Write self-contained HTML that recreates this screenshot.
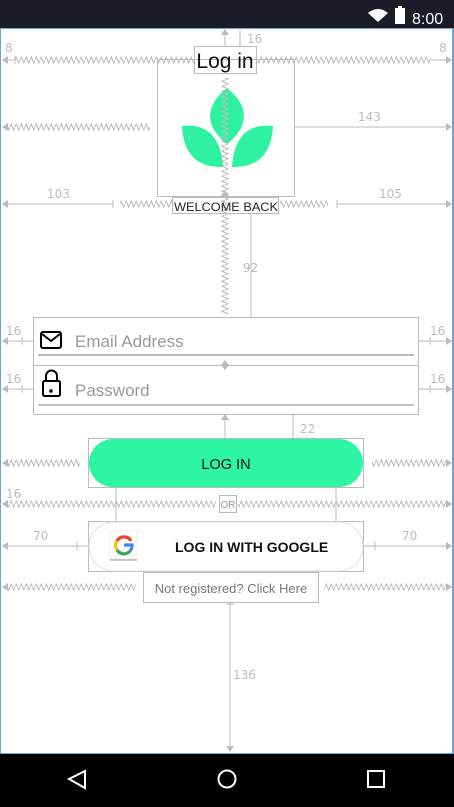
<!DOCTYPE html>
<html><head><meta charset="utf-8"><style>
html,body{margin:0;padding:0;width:454px;height:807px;overflow:hidden;background:#fff;font-family:"Liberation Sans",sans-serif}
.a{position:absolute}
</style></head><body>
<div class="a" style="left:0;top:0;width:454px;height:28px;background:#1a1d27"></div>
<div class="a" style="left:0;top:28px;width:454px;height:726px;box-sizing:border-box;border-left:1px solid #6fa3dc;border-right:2px solid #6fa3dc;border-top:1px solid #6fa3dc;border-bottom:1px solid #6fa3dc"></div>
<div class="a" style="left:0;top:754px;width:454px;height:53px;background:#000"></div>
<svg class="a" style="left:0;top:0" width="454" height="807" viewBox="0 0 454 807">
<defs>
<pattern id="zh" width="5" height="8" patternUnits="userSpaceOnUse"><path d="M0 4 L1.25 1 L3.75 7 L5 4" stroke="#bbb" fill="none" stroke-width="1"/></pattern>
<pattern id="zv" width="8" height="5" patternUnits="userSpaceOnUse"><path d="M4 0 L1 1.25 L7 3.75 L4 5" stroke="#bbb" fill="none" stroke-width="1"/></pattern>
</defs>
<path d="M368 13 L378 22 L388 13 Q378 5 368 13Z" fill="#fff"/>
<rect x="395" y="8" width="10" height="16" fill="#fff"/><rect x="398" y="6" width="4" height="3" fill="#fff"/>
<text x="412" y="24" fill="#fff" font-size="16">8:00</text>
<g stroke="#bbb" fill="none" stroke-width="1">
<line x1="2" y1="60" x2="15" y2="60"/><line x1="15" y1="56" x2="15" y2="64"/>
<line x1="431" y1="60" x2="451" y2="60"/>
<line x1="294" y1="127" x2="451" y2="127"/>
<line x1="2" y1="204" x2="113" y2="204"/><line x1="113" y1="200" x2="113" y2="208"/>
<line x1="337" y1="204" x2="451" y2="204"/><line x1="337" y1="200" x2="337" y2="208"/>
<line x1="225" y1="30" x2="225" y2="46"/><line x1="240" y1="28" x2="240" y2="46"/>
<line x1="251" y1="213" x2="251" y2="317"/>
<line x1="2" y1="341" x2="33" y2="341"/><line x1="22" y1="337" x2="22" y2="345"/>
<line x1="418" y1="341" x2="451" y2="341"/><line x1="430" y1="337" x2="430" y2="345"/>
<line x1="2" y1="389" x2="33" y2="389"/><line x1="22" y1="385" x2="22" y2="393"/>
<line x1="418" y1="389" x2="451" y2="389"/><line x1="430" y1="385" x2="430" y2="393"/>
<line x1="225" y1="414" x2="225" y2="438"/><line x1="293" y1="414" x2="293" y2="438"/>
<line x1="116" y1="487" x2="116" y2="521"/><line x1="336" y1="487" x2="336" y2="521"/>
<line x1="2" y1="546" x2="88" y2="546"/><line x1="77" y1="542" x2="77" y2="550"/>
<line x1="363" y1="546" x2="451" y2="546"/><line x1="375" y1="542" x2="375" y2="550"/>
<line x1="230" y1="603" x2="230" y2="750"/><line x1="226" y1="604" x2="234" y2="604"/>
<rect x="194.5" y="46.5" width="62" height="27"/>
<rect x="157.5" y="59.5" width="137" height="137"/>
<rect x="172.5" y="197.5" width="106" height="16"/>
<rect x="33.5" y="317.5" width="385" height="48"/>
<rect x="33.5" y="365.5" width="385" height="49"/>
<rect x="88.5" y="438.5" width="275" height="49"/>
<rect x="219.5" y="495.5" width="17" height="17"/>
<rect x="88.5" y="521.5" width="275" height="50"/>
<rect x="143.5" y="572.5" width="175" height="30"/>
</g>
<g fill="#bbb">
<path d="M2 60 L8 56 L8 64Z"/><path d="M452 60 L446 56 L446 64Z"/>
<path d="M2 127 L8 123 L8 131Z"/><path d="M452 127 L446 123 L446 131Z"/>
<path d="M2 204 L8 200 L8 208Z"/><path d="M452 204 L446 200 L446 208Z"/>
<path d="M225 29 L221 35 L229 35Z"/>
<path d="M2 341 L8 337 L8 345Z"/><path d="M452 341 L446 337 L446 345Z"/>
<path d="M2 389 L8 385 L8 393Z"/><path d="M452 389 L446 385 L446 393Z"/>
<path d="M225 414 L221 420 L229 420Z"/>
<path d="M2 463 L8 459 L8 467Z"/><path d="M452 463 L446 459 L446 467Z"/>
<path d="M2 504 L8 500 L8 508Z"/><path d="M452 504 L446 500 L446 508Z"/>
<path d="M2 546 L8 542 L8 550Z"/><path d="M452 546 L446 542 L446 550Z"/>
<path d="M2 587 L8 583 L8 591Z"/><path d="M452 587 L446 583 L446 591Z"/>
<path d="M230 752 L226 746 L234 746Z"/>
<path d="M225 190 L221 196 L229 196Z"/>
<path d="M221 365 L229 365 L225 360Z M221 365 L229 365 L225 370Z"/>
</g>
<g transform="translate(0,56)"><rect x="15" y="0" width="179" height="8" fill="url(#zh)"/><rect x="256" y="0" width="175" height="8" fill="url(#zh)"/></g>
<g transform="translate(0,123)"><rect x="6" y="0" width="144" height="8" fill="url(#zh)"/></g>
<g transform="translate(0,200)"><rect x="120" y="0" width="52" height="8" fill="url(#zh)"/><rect x="280" y="0" width="48" height="8" fill="url(#zh)"/></g>
<g transform="translate(0,459)"><rect x="6" y="0" width="74" height="8" fill="url(#zh)"/><rect x="372" y="0" width="74" height="8" fill="url(#zh)"/></g>
<g transform="translate(0,500)"><rect x="6" y="0" width="210" height="8" fill="url(#zh)"/><rect x="238" y="0" width="208" height="8" fill="url(#zh)"/></g>
<g transform="translate(0,583)"><rect x="6" y="0" width="130" height="8" fill="url(#zh)"/><rect x="324" y="0" width="122" height="8" fill="url(#zh)"/></g>
<path d="M227 88 Q252 108 240 130 Q233 140 227 144 Q221 140 214 130 Q202 108 227 88Z" fill="#2ef2a2"/>
<path d="M182 126 Q220 122 223 167 Q184 168 182 126Z" fill="#2ef2a2"/>
<path d="M273 126 Q235 122 232 167 Q271 168 273 126Z" fill="#2ef2a2"/>
<g transform="translate(221,0)"><rect x="0" y="78" width="8" height="236" fill="url(#zv)"/></g>
<g fill="#bbb" font-size="12" font-family="DejaVu Sans,sans-serif">
<text x="5" y="52">8</text><text x="439" y="52">8</text><text x="247" y="43">16</text>
<text x="358" y="121">143</text><text x="47" y="198">103</text><text x="379" y="198">105</text>
<text x="243" y="272">92</text>
<text x="6" y="335">16</text><text x="430" y="335">16</text>
<text x="6" y="383">16</text><text x="430" y="383">16</text>
<text x="300" y="433">22</text><text x="6" y="498">16</text>
<text x="33" y="540">70</text><text x="402" y="540">70</text>
<text x="233" y="679">136</text>
</g>
<line x1="38" y1="355" x2="414" y2="355" stroke="#777" stroke-width="1"/>
<line x1="38" y1="405" x2="414" y2="405" stroke="#aaa" stroke-width="1.5"/>
<rect x="41" y="332" width="20" height="16" rx="2" fill="none" stroke="#000" stroke-width="2"/>
<path d="M42 334 L51 341 L60 334" fill="none" stroke="#000" stroke-width="2"/>
<rect x="43" y="381" width="17" height="15" rx="1.5" fill="none" stroke="#000" stroke-width="2"/>
<path d="M46 381 V376 A5.5 5.5 0 0 1 57 376 V381" fill="none" stroke="#000" stroke-width="2"/>
<circle cx="51" cy="391" r="1.8" fill="#000"/>
<text x="75" y="347" fill="#999" font-size="17">Email Address</text>
<text x="75" y="396" fill="#999" font-size="17">Password</text>
<rect x="89" y="439" width="274" height="48" rx="24" fill="#2ef5a2"/>
<text x="226" y="469" font-size="14.5" fill="#111" text-anchor="middle">LOG IN</text>
<rect x="89" y="522" width="274" height="49" rx="24.5" fill="#fff" stroke="#ddd"/>
<rect x="110" y="531" width="27" height="28" fill="#fff" stroke="#eee"/>
<line x1="110" y1="560" x2="137" y2="560" stroke="#999"/>
<g fill="none" stroke-width="3.2">
<path d="M131 541 A8 8 0 0 0 117 541" stroke="#ea4335"/>
<path d="M117 541 A8 8 0 0 0 117 550" stroke="#fbbc05"/>
<path d="M117 550 A8 8 0 0 0 130 551" stroke="#34a853"/>
<path d="M130 551 A8 8 0 0 0 132 545 H124" stroke="#4285f4"/>
</g>
<text x="175" y="552" font-size="14" fill="#111" font-weight="bold">LOG IN WITH GOOGLE</text>
<text x="228" y="508" font-size="10" fill="#999" text-anchor="middle">OR</text>
<text x="231" y="593" font-size="13" fill="#777" text-anchor="middle">Not registered? Click Here</text>
<text x="225" y="68" font-size="21" fill="#111" text-anchor="middle">Log in</text>
<text x="226" y="211" font-size="12" fill="#222" text-anchor="middle" textLength="104" lengthAdjust="spacingAndGlyphs">WELCOME BACK</text>
<path d="M69 779 L85 771 L85 788Z" fill="none" stroke="#fff" stroke-width="2"/>
<circle cx="227" cy="779" r="8.5" fill="none" stroke="#fff" stroke-width="2"/>
<rect x="368" y="771" width="16" height="16" fill="none" stroke="#fff" stroke-width="2"/>
</svg>
</body></html>
